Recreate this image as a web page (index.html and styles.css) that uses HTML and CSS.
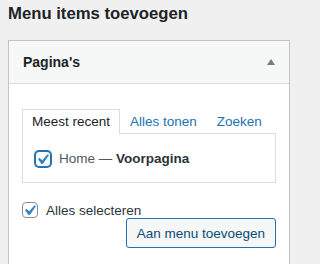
FILE: index.html
```html
<!DOCTYPE html>
<html lang="nl">
<head>
<meta charset="utf-8">
<title>Menu items toevoegen</title>
<link rel="stylesheet" href="styles.css">
</head>
<body>
<div class="page">
  <h2 class="title">Menu items toevoegen</h2>
  <div class="box">
    <div class="box-head">
      <h3 class="box-title">Pagina's</h3>
      <span class="arrow" aria-hidden="true"></span>
    </div>
    <div class="box-body">
      <ul class="tabs">
        <li class="tab active">Meest recent</li>
        <li class="tab"><a href="#">Alles tonen</a></li>
        <li class="tab"><a href="#">Zoeken</a></li>
      </ul>
      <div class="tab-panel">
        <label class="item">
          <span class="cb focused"><svg viewBox="3.81 2.86 13.33 13.33"><path d="M14.83 4.89l1.34.94-5.81 8.38H9.02L5.78 9.67l1.34-1.25 2.57 2.4z" fill="#3582c4"/></svg></span>
          <span class="item-text">Home — <strong>Voorpagina</strong></span>
        </label>
      </div>
      <label class="select-all">
        <span class="cb"><svg viewBox="3.81 2.86 13.33 13.33"><path d="M14.83 4.89l1.34.94-5.81 8.38H9.02L5.78 9.67l1.34-1.25 2.57 2.4z" fill="#3582c4"/></svg></span>
        <span>Alles selecteren</span>
      </label>
      <div class="add-row">
        <button class="button" type="button">Aan menu toevoegen</button>
      </div>
    </div>
  </div>
</div>
</body>
</html>
```
FILE: styles.css
```css
html, body {
  margin: 0;
  padding: 0;
  background: #f0f0f1;
}
body {
  font-family: "Liberation Sans", Arial, sans-serif;
  font-size: 13.5px;
  color: #3c434a;
}
.page {
  padding: 0 10px 0 8px;
}
.title {
  margin: 0 0 14px;
  padding-top: 2px;
  font-size: 16.7px;
  line-height: 24px;
  font-weight: bold;
  color: #1d2327;
}
.box {
  width: 282px;
  box-sizing: border-box;
  border: 1px solid #c3c4c7;
  border-bottom: 0;
  background: #fff;
  height: 230px;
}
.box-head {
  display: flex;
  align-items: center;
  justify-content: space-between;
  height: 42px;
  padding: 0 14px 0 14px;
  background: #f6f7f7;
  border-bottom: 1px solid #dcdcde;
}
.box-title {
  margin: 0;
  font-size: 14px;
  line-height: 42px;
  font-weight: bold;
  color: #1d2327;
}
.arrow {
  width: 0;
  height: 0;
  border-left: 4px solid transparent;
  border-right: 4px solid transparent;
  border-bottom: 6px solid #787c82;
  margin-top: -1px;
}
.box-body {
  padding: 25px 13px 0;
}
.tabs {
  display: flex;
  margin: 0;
  padding: 0;
  list-style: none;
}
.tab {
  padding: 0 9px;
  height: 24px;
  line-height: 24px;
  border: 1px solid transparent;
  border-bottom: 0;
  margin-bottom: -1px;
}
.tab.active {
  border-color: #dcdcde;
  background: #fff;
  color: #1d2327;
  position: relative;
  z-index: 1;
}
.tab a {
  color: #2271b1;
  text-decoration: none;
}
.tab-panel {
  border: 1px solid #dcdcde;
  height: 47px;
  padding: 1px 11px 0;
  display: flex;
  align-items: center;
}
.item, .select-all {
  display: flex;
  align-items: center;
  gap: 8px;
}
.cb {
  display: block;
  width: 16px;
  height: 16px;
  box-sizing: border-box;
  border: 1px solid #8c8f94;
  border-radius: 4px;
  background: #fff;
  flex: none;
}
.cb svg {
  display: block;
  width: 14px;
  height: 14px;
}
.cb.focused {
  border-color: #2271b1;
  box-shadow: 0 0 0 1px #2271b1;
  margin-left: 1px;
}
.item-text {
  color: #50575e;
  line-height: 18px;
}
.item-text strong {
  color: #2c3338;
  font-weight: bold;
}
.select-all {
  margin-top: 19px;
  height: 16px;
  color: #2c3338;
}
.add-row {
  display: flex;
  justify-content: flex-end;
}
.button {
  font-family: inherit;
  font-size: 13.5px;
  height: 30px;
  padding: 0 10px;
  border: 1px solid #2271b1;
  border-radius: 3px;
  background: #f6f7f7;
  color: #0a4b78;
  cursor: pointer;
}
```
